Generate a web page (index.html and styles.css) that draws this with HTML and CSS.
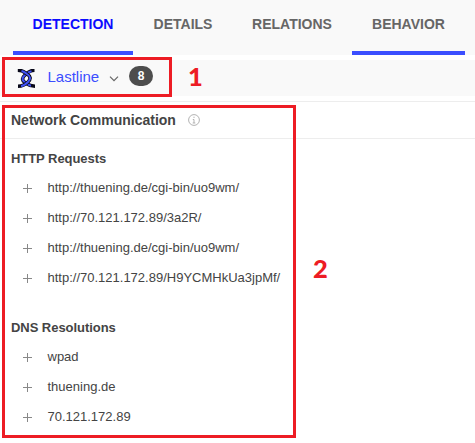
FILE: index.html
```html
<!DOCTYPE html>
<html lang="en">
<head>
<meta charset="utf-8">
<title>Behavior</title>
<link rel="stylesheet" href="styles.css">
</head>
<body>
<nav class="tabs">
  <a class="tab tab-hover tab-active">DETECTION</a>
  <a class="tab tab-short">DETAILS</a>
  <a class="tab">RELATIONS</a>
  <a class="tab tab-active tab-last">BEHAVIOR</a>
</nav>
<header class="sandbox">
  <svg class="logo" width="19" height="19" viewBox="0 0 19 19" fill="none">
    <path d="M17.500 1.300C12.500 1.300 10.500 3.500 8 6C4.500 9 5 11.500 8 13.500C11 15.500 12 17.200 18 17.200" stroke="#080818" stroke-width="3.600"/>
    <path d="M14.500 2.200C12.500 2.500 10.500 3.500 8 6C4.500 9 5 11.500 8 13.500C11 15.500 12 16.500 14 16.800" stroke="#3f51f5" stroke-width="2"/>
    <path d="M.8 1.300C6.500 1.300 7 3 10 5C14 7.500 14 10 11 13C8.500 15.500 6.500 17.200 1 17.200" stroke="#080818" stroke-width="3.600"/>
    <path d="M4.500 2C6.500 2.200 7 3 10 5C14 7.500 14 10 11 13C8.500 15.500 6.500 16.800 4 17" stroke="#3f51f5" stroke-width="2"/>
  </svg>
  <span class="name">Lastline</span>
  <svg class="chevron" width="10" height="6" viewBox="0 0 10 6" fill="none" stroke="#666" stroke-width="1.200"><path d="M1 .7L5 4.700L9 .7"/></svg>
  <span class="badge">8</span>
</header>
<main>
  <h1 class="title"><span>Network Communication</span>
    <svg width="12" height="12" viewBox="0 0 12 12" fill="none" stroke="#aaa"><circle cx="6" cy="6" r="5.400" stroke-width=".9"/><path d="M6 2.700V4M4.800 5.500H6V9M4.700 9H7.300" stroke-width=".9"/></svg>
  </h1>
  <section class="group">
    <h2>HTTP Requests</h2>
    <ul>
      <li><i class="plus"></i><span>http://thuening.de/cgi-bin/uo9wm/</span></li>
      <li><i class="plus"></i><span>http://70.121.172.89/3a2R/</span></li>
      <li><i class="plus"></i><span>http://thuening.de/cgi-bin/uo9wm/</span></li>
      <li><i class="plus"></i><span>http://70.121.172.89/H9YCMHkUa3jpMf/</span></li>
    </ul>
  </section>
  <section class="group group-last">
    <h2>DNS Resolutions</h2>
    <ul>
      <li><i class="plus"></i><span>wpad</span></li>
      <li><i class="plus"></i><span>thuening.de</span></li>
      <li><i class="plus"></i><span>70.121.172.89</span></li>
    </ul>
  </section>
</main>
<div class="frame frame-one"></div>
<div class="frame frame-two"></div>
<div class="callout callout-one">1</div>
<div class="callout callout-two">2</div>
</body>
</html>
```

FILE: styles.css
```css
* { box-sizing: border-box; }
body {
  margin: 0;
  height: 443px;
  position: relative;
  overflow: hidden;
  background: #fff;
  color: #444;
  font: 14px/18px "Liberation Sans", Arial, sans-serif;
}
.tabs { display: flex; height: 55px; padding-left: 13px; background: #f9f9f9; }
.tab {
  width: 120px;
  height: 55px;
  padding-top: 15px;
  text-align: center;
  font-weight: bold;
  color: #666;
  white-space: nowrap;
}
.tab-short { width: 99px; padding-left: 1px; }
.tab-last { width: 113px; }
.tab-active { border-bottom: 4px solid #3b4eff; }
.tab-hover { color: #0b0bff; }
.sandbox {
  display: flex;
  align-items: center;
  height: 36px;
  margin-top: 5px;
  padding-left: 17px;
  background: #f9f9f9;
}
.name { width: 61px; margin: -2px 0 0 11.500px; font-size: 15px; color: #3b4eff; }
.chevron { margin: 1px 10.500px 0 0; }
.badge {
  width: 24px;
  height: 20px;
  margin-bottom: 4px;
  border-radius: 10px;
  background: #4d4d4d;
  color: #fff;
  font-size: 12px;
  font-weight: bold;
  line-height: 20px;
  text-align: center;
}
main { margin-top: 5px; border-top: 1px solid #ededed; }
h1, h2, ul { margin: 0; padding: 0; }
.title {
  display: flex;
  align-items: center;
  gap: 12px;
  height: 37px;
  padding-left: 11px;
  border-bottom: 1px solid #ededed;
  font-size: 14px;
}
.group { padding: 10px 0 0 11px; height: 169px; }
.group-last { height: 126px; }
.group h2 { height: 24px; font-size: 13px; line-height: 20px; letter-spacing: -.05px; }
ul { list-style: none; }
li { display: flex; align-items: center; height: 30px; padding-left: 11.500px; font-size: 13px; }
.plus {
  width: 9px;
  height: 9px;
  margin-right: 16px;
  background: linear-gradient(#888, #888) center / 9px 1px no-repeat, linear-gradient(#888, #888) center / 1px 9px no-repeat;
}
.frame { position: absolute; left: 2px; border: 3px solid #ed1c24; }
.frame-one { top: 57px; width: 170px; height: 40px; }
.frame-two { top: 105px; width: 294px; height: 333px; }
.callout { position: absolute; color: #ed1c24; font: 900 25.500px/30px Lato, sans-serif; }
.callout-one { left: 188px; top: 61px; }
.callout-two { left: 313px; top: 253px; }
```
